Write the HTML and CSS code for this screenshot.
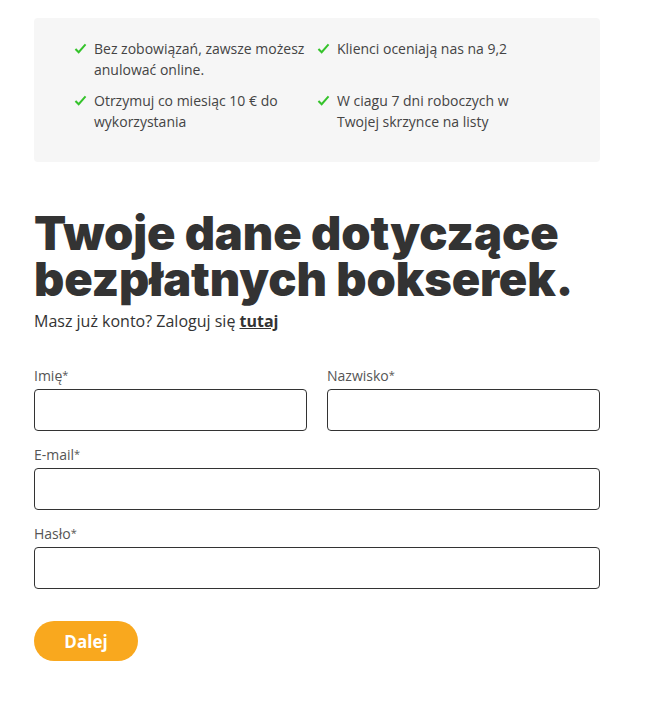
FILE: index.html
```html
<!DOCTYPE html>
<html lang="pl">
<head>
    <meta charset="UTF-8">
    <meta name="viewport" content="width=device-width, initial-scale=1.0">
    <title>Twoje dane</title>
    <link rel="stylesheet" href="styles.css">
</head>
<body>
    <div class="page">
        <!-- Benefits box -->
        <div class="benefits">
            <ul class="benefit-list">
                <li><span class="check"><svg viewBox="0 0 14 12"><path d="M1.5 6.5 L5 10 L12.5 1.5"/></svg></span><span>Bez zobowiązań, zawsze możesz anulować online.</span></li>
                <li><span class="check"><svg viewBox="0 0 14 12"><path d="M1.5 6.5 L5 10 L12.5 1.5"/></svg></span><span>Klienci oceniają nas na 9,2</span></li>
                <li><span class="check"><svg viewBox="0 0 14 12"><path d="M1.5 6.5 L5 10 L12.5 1.5"/></svg></span><span>Otrzymuj co miesiąc 10 € do wykorzystania</span></li>
                <li><span class="check"><svg viewBox="0 0 14 12"><path d="M1.5 6.5 L5 10 L12.5 1.5"/></svg></span><span>W ciagu 7 dni roboczych w Twojej skrzynce na listy</span></li>
            </ul>
        </div>

        <h1 class="title">Twoje dane dotyczące bezpłatnych bokserek.</h1>
        <p class="login">Masz już konto? Zaloguj się <a href="#">tutaj</a></p>

        <form class="form">
            <div class="row two">
                <label class="field">
                    <span class="label">Imię<small>*</small></span>
                    <input type="text">
                </label>
                <label class="field">
                    <span class="label">Nazwisko<small>*</small></span>
                    <input type="text">
                </label>
            </div>
            <label class="field">
                <span class="label">E-mail<small>*</small></span>
                <input type="email">
            </label>
            <label class="field">
                <span class="label">Hasło<small>*</small></span>
                <input type="password">
            </label>
            <button type="button" class="next">Dalej</button>
        </form>
    </div>
</body>
</html>
```

FILE: styles.css
```css
body {
    margin: 0;
    font-family: "Open Sans", sans-serif;
    color: #333;
    background: #fff;
}

.page {
    width: 566px;
    margin-left: 34px;
    padding-top: 18px;
}

/* Benefits box */
.benefits {
    background: #f6f6f6;
    border-radius: 4px;
    padding: 20px 40px 30px 40px;
}

.benefit-list {
    list-style: none;
    margin: 0;
    padding: 0;
    display: grid;
    grid-template-columns: 243px 206px;
    row-gap: 10px;
}

.benefit-list li {
    display: flex;
    font-size: 14px;
    line-height: 21px;
    color: #444;
}

.check {
    flex: none;
    width: 20px;
    padding-top: 5px;
}

.check svg {
    width: 13px;
    height: 11px;
    fill: none;
    stroke: #35c32b;
    stroke-width: 2.2;
    display: block;
}

/* Heading */
.title {
    font-family: Inter, sans-serif;
    font-weight: 900;
    font-size: 47px;
    line-height: 46px;
    letter-spacing: -0.1px;
    color: #333;
    margin: 48px 0 0 0;
    width: 600px;
}

.login {
    font-size: 16px;
    line-height: 22px;
    margin: 8px 0 0 0;
    color: #333;
}

.login a {
    color: #333;
    font-weight: 700;
    text-decoration: underline;
}

/* Form */
.form {
    margin-top: 33px;
    display: flex;
    flex-direction: column;
    gap: 13px;
}

.row.two {
    display: grid;
    grid-template-columns: 1fr 1fr;
    column-gap: 20px;
}

.field {
    display: flex;
    flex-direction: column;
}

.label {
    font-size: 14px;
    line-height: 20px;
    color: #555;
    margin-bottom: 3px;
}

.label small {
    font-size: 11px;
    vertical-align: 2px;
}

.field input {
    box-sizing: border-box;
    height: 42px;
    border: 1px solid #333;
    border-radius: 4px;
    background: #fff;
    font-family: "Open Sans", sans-serif;
    font-size: 15px;
    padding: 0 12px;
}

.next {
    align-self: flex-start;
    margin-top: 19px;
    width: 104px;
    height: 40px;
    border: none;
    border-radius: 20px;
    background: #f9a81e;
    color: #fff;
    font-family: "Open Sans", sans-serif;
    font-weight: 700;
    font-size: 17px;
    cursor: pointer;
}
```
